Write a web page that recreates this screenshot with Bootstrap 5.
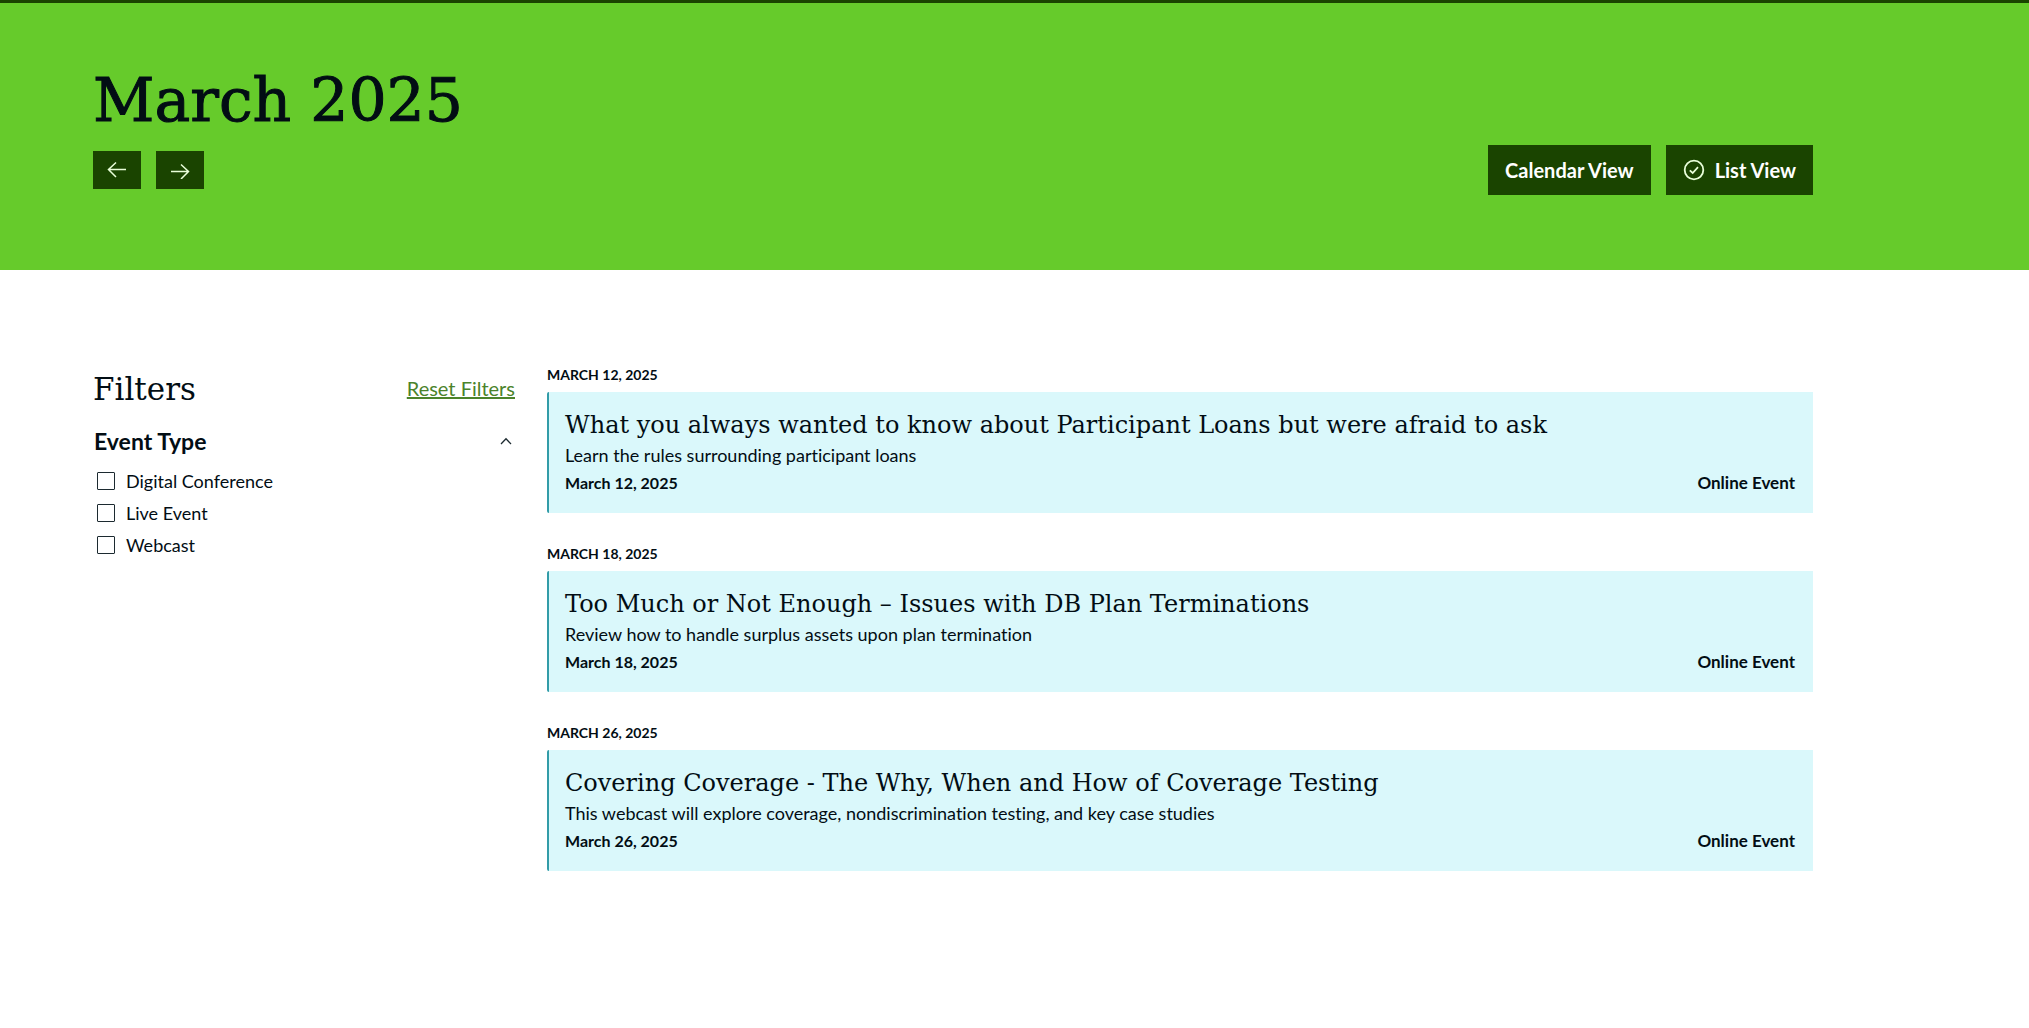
<!DOCTYPE html>
<html lang="en">
<head>
<meta charset="utf-8">
<meta name="viewport" content="width=device-width, initial-scale=1">
<title>March 2025 Events</title>
<link href="https://cdn.jsdelivr.net/npm/bootstrap@5.3.0/dist/css/bootstrap.min.css" rel="stylesheet">
<style>
  :root { --ink: #020d14; --forest: #1a4400; --lime: #66cb2b; --ice: #daf8fb; --teal: #329ca8; }
  body { font-family: Lato, "Open Sans", sans-serif; font-size: 18px; color: var(--ink); background: #fff; font-variant-ligatures: none; }
  .serif { font-family: "DejaVu Serif", serif; font-weight: 400; margin: 0; }
  .page-wrap { max-width: 1813px; padding-left: 93px; }
  .hero { background: var(--lime); border-top: 3px solid var(--forest); padding: 61px 0 75px; }
  .hero-title { font-size: 60px; line-height: 72px; margin-bottom: 9px; -webkit-text-stroke: 1px var(--ink); }
  .gap-btn { gap: 15px; }
  .btn-forest { --bs-btn-color: #fff; --bs-btn-bg: var(--forest); --bs-btn-hover-color: #fff; --bs-btn-hover-bg: #0f2a00;
    --bs-btn-active-bg: #0f2a00; --bs-btn-active-color: #fff; --bs-btn-border-width: 0; --bs-btn-border-radius: 0; --bs-btn-font-family: Lato, sans-serif; }
  .btn-step { width: 48px; height: 38px; padding: 0; }
  .btn-view { height: 50px; padding: 0 17px; font-size: 20px; font-weight: 700; gap: 10px; }
  .content-area { padding-top: 95px; padding-bottom: 95px; gap: 32px; }
  .filter-pane { flex: 1 1 0; padding-top: 4px; }
  .event-pane { flex: 3 1 0; gap: 31px; }
  .filter-title { font-size: 31px; line-height: 40px; }
  .reset-link { font-size: 20px; line-height: 38px; color: #4b832b; }
  .group-toggle { margin: 16px 0 8px; padding: 0 3px 0 1px; font-size: 23px; line-height: 32px; color: var(--ink); }
  .option { min-height: 32px; line-height: 32px; margin: 0; padding: 0 0 0 4px; gap: 11px; }
  .option .form-check-input { width: 18px; height: 18px; margin: 0; float: none; border: 1px solid #1c2a30; border-radius: 1px; }
  .day-label { font-size: 14px; line-height: 20px; font-weight: 700; margin-bottom: 7px; text-transform: uppercase; }
  .event-box { background: var(--ice); border: 0; border-left: 2px solid var(--teal); border-radius: 2px 0 0 2px; padding: 17px 18px 16px 16px; color: var(--ink); }
  .event-name { font-size: 24px; line-height: 32px; }
  .event-name a { color: inherit; }
  .event-line { line-height: 28px; margin: 0; }
  .event-day { font-size: 16px; font-weight: 700; }
  .event-place { font-size: 17px; font-weight: 700; }
  @media (max-width: 991px) {
    .page-wrap { padding-left: 24px; padding-right: 24px; }
    .content-area { flex-direction: column; }
  }
</style>
</head>
<body>
<header class="hero">
  <div class="page-wrap">
    <h1 class="serif hero-title">March 2025</h1>
    <div class="d-flex flex-wrap justify-content-between align-items-center gap-btn">
      <div class="d-flex gap-btn">
        <button type="button" class="btn btn-forest btn-step d-flex align-items-center justify-content-center" aria-label="Previous month">
          <svg width="20" height="18" viewBox="0 0 20 18" fill="none" stroke="#e9ffd9" stroke-width="1.5"><path d="M19 8.500H1.500M9 1.500L1.500 8.500L9 16"/></svg>
        </button>
        <button type="button" class="btn btn-forest btn-step d-flex align-items-center justify-content-center" aria-label="Next month">
          <svg width="20" height="18" viewBox="0 0 20 18" fill="none" stroke="#e9ffd9" stroke-width="1.5"><path d="M1 10.500H18.500M11 3.500L18.500 10.500L11 18"/></svg>
        </button>
      </div>
      <div class="d-flex gap-btn">
        <button type="button" class="btn btn-forest btn-view">Calendar View</button>
        <button type="button" class="btn btn-forest btn-view d-flex align-items-center" aria-pressed="true">
          <svg width="22" height="22" viewBox="0 0 22 22" fill="none" stroke="#e9ffd9" stroke-width="1.800"><circle cx="11" cy="11" r="9.300"/><path d="M6.800 11.300L9.700 14L15 8.200"/></svg>
          List View
        </button>
      </div>
    </div>
  </div>
</header>

<main class="page-wrap content-area d-flex">
  <aside class="filter-pane">
    <div class="d-flex justify-content-between align-items-start">
      <h2 class="serif filter-title">Filters</h2>
      <a href="#" class="reset-link">Reset Filters</a>
    </div>
    <button type="button" class="group-toggle btn border-0 w-100 d-flex justify-content-between align-items-center fw-bold" data-bs-toggle="collapse" data-bs-target="#types" aria-expanded="true" aria-controls="types">
      Event Type
      <svg width="12" height="8" viewBox="0 0 12 8" fill="none" stroke="#1c2a30" stroke-width="1.300"><path d="M1 7L6 1.800L11 7"/></svg>
    </button>
    <div id="types" class="collapse show">
      <div class="form-check option d-flex align-items-center"><input class="form-check-input" type="checkbox" id="digital"><label for="digital">Digital Conference</label></div>
      <div class="form-check option d-flex align-items-center"><input class="form-check-input" type="checkbox" id="live"><label for="live">Live Event</label></div>
      <div class="form-check option d-flex align-items-center"><input class="form-check-input" type="checkbox" id="webcast"><label for="webcast">Webcast</label></div>
    </div>
  </aside>

  <div class="event-pane d-flex flex-column">
    <section>
      <div class="day-label">March 12, 2025</div>
      <article class="card event-box">
        <h3 class="serif event-name"><a href="#" class="text-decoration-none">What you always wanted to know about Participant Loans but were afraid to ask</a></h3>
        <p class="event-line">Learn the rules surrounding participant loans</p>
        <div class="event-line d-flex justify-content-between"><span class="event-day">March 12, 2025</span><span class="event-place">Online Event</span></div>
      </article>
    </section>
    <section>
      <div class="day-label">March 18, 2025</div>
      <article class="card event-box">
        <h3 class="serif event-name"><a href="#" class="text-decoration-none">Too Much or Not Enough – Issues with DB Plan Terminations</a></h3>
        <p class="event-line">Review how to handle surplus assets upon plan termination</p>
        <div class="event-line d-flex justify-content-between"><span class="event-day">March 18, 2025</span><span class="event-place">Online Event</span></div>
      </article>
    </section>
    <section>
      <div class="day-label">March 26, 2025</div>
      <article class="card event-box">
        <h3 class="serif event-name"><a href="#" class="text-decoration-none">Covering Coverage - The Why, When and How of Coverage Testing</a></h3>
        <p class="event-line">This webcast will explore coverage, nondiscrimination testing, and key case studies</p>
        <div class="event-line d-flex justify-content-between"><span class="event-day">March 26, 2025</span><span class="event-place">Online Event</span></div>
      </article>
    </section>
  </div>
</main>
<script src="https://cdn.jsdelivr.net/npm/bootstrap@5.3.0/dist/js/bootstrap.bundle.min.js"></script>
</body>
</html>
